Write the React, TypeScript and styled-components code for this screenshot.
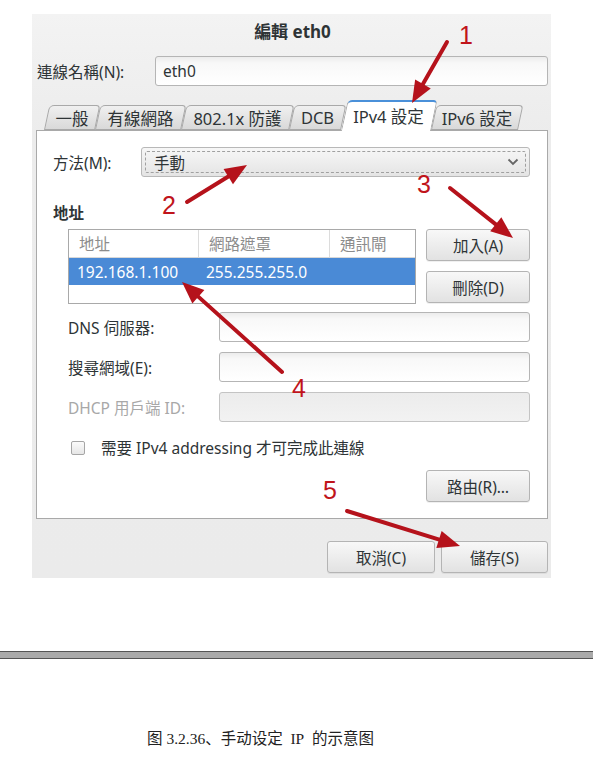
import styled, { createGlobalStyle } from 'styled-components';

const GlobalStyle = createGlobalStyle`
  html, body {
    margin: 0;
    padding: 0;
    background: #ffffff;
  }
  body {
    font-family: "Noto Sans", "Noto Sans CJK TC", sans-serif;
  }
`;

const Page = styled.div`
  width: 593px;
  height: 771px;
  display: flex;
  flex-direction: column;
  overflow: hidden;
`;

const Dialog = styled.div`
  position: relative;
  margin: 14px 0 0 32px;
  width: 519px;
  height: 564px;
  box-sizing: border-box;
  background: linear-gradient(to bottom, #f3f3f3 0px, #ececec 120px, #ebebeb 100%);
  color: #2e3436;
  font-size: 15.5px;
  display: flex;
  flex-direction: column;
`;

const Title = styled.div`
  height: 32px;
  display: flex;
  align-items: center;
  justify-content: center;
  font-weight: 700;
  font-size: 17px;
  padding-left: 2px;
`;

const NameRow = styled.div`
  display: flex;
  align-items: center;
  margin-top: 10px;
  padding: 0 3px 0 5px;
`;

const RowLabel = styled.label<{ width: number; muted?: boolean }>`
  width: ${p => p.width}px;
  flex: none;
  color: ${p => (p.muted ? '#a8a8a8' : '#2e3436')};
  white-space: nowrap;
`;

const TextField = styled.div<{ disabled?: boolean }>`
  height: 30px;
  box-sizing: border-box;
  flex: 1;
  border: 1px solid ${p => (p.disabled ? '#c4c4c4' : '#b5b5b5')};
  border-radius: 3px;
  background: ${p =>
    p.disabled
      ? 'linear-gradient(to bottom, #ececec, #f2f2f2)'
      : 'linear-gradient(to bottom, #ececec 0px, #f8f8f8 6px, #ffffff 100%)'};
  padding: 0 7px;
  display: flex;
  align-items: center;
  color: #2e3436;
`;

const TabStrip = styled.div`
  display: flex;
  align-items: flex-end;
  margin-top: 13px;
  padding-left: 12px;
  height: 31px;
  position: relative;
  z-index: 1;
`;

const Tab = styled.div<{ active?: boolean; w: number }>`
  width: ${p => p.w}px;
  height: ${p => (p.active ? 31 : 25)}px;
  box-sizing: border-box;
  padding-left: 5px;
  display: flex;
  align-items: center;
  justify-content: center;
  white-space: nowrap;
  font-size: 16.5px;
  color: #2e3436;
  margin-bottom: ${p => (p.active ? '-1px' : '0')};
  position: relative;
  z-index: ${p => (p.active ? 2 : 1)};

  &::before {
    content: '';
    position: absolute;
    inset: 0;
    z-index: -1;
    border: 1px solid #a9a9a9;
    border-top: ${p => (p.active ? '2px solid #4a90d9' : '1px solid #a9a9a9')};
    border-bottom: ${p => (p.active ? 'none' : '1px solid #a9a9a9')};
    border-radius: 5px 4px 0 0;
    background: ${p =>
      p.active ? '#ffffff' : 'linear-gradient(to bottom, #f0f0f0, #d9d9d9)'};
    transform: skewX(-12deg);
    transform-origin: bottom;
  }
`;

const Panel = styled.div`
  margin: 0 3px 0 4px;
  height: 389px;
  box-sizing: border-box;
  background: #ffffff;
  border: 1px solid #a9a9a9;
  padding: 16px 17px 0 16px;
  display: flex;
  flex-direction: column;
`;

const MethodRow = styled.div`
  display: flex;
  align-items: center;
`;

const Combo = styled.div`
  flex: 1;
  height: 30px;
  box-sizing: border-box;
  border: 1px solid #b8b8b8;
  border-radius: 3px;
  background: linear-gradient(to bottom, #f7f7f7, #e4e4e4);
  padding: 3px;
  display: flex;
`;

const ComboFocus = styled.div`
  flex: 1;
  border: 1px dashed #a0a0a0;
  border-radius: 2px;
  display: flex;
  align-items: center;
  justify-content: space-between;
  padding: 0 6px 0 8px;
`;

const SectionTitle = styled.div`
  font-weight: 700;
  margin-top: 26px;
  height: 20px;
  line-height: 20px;
`;

const AddressBlock = styled.div`
  display: flex;
  gap: 10px;
  margin: 6px 0 0 15px;
`;

const AddrTable = styled.div`
  width: 350px;
  height: 75px;
  box-sizing: border-box;
  border: 1px solid #a9a9a9;
  background: #ffffff;
  display: flex;
  flex-direction: column;
`;

const TableRow = styled.div<{ selected?: boolean; header?: boolean }>`
  height: 27px;
  display: grid;
  grid-template-columns: 129px 131px 1fr;
  align-items: center;
  background: ${p => (p.selected ? '#4a8ad6' : 'transparent')};
  color: ${p => (p.selected ? '#ffffff' : p.header ? '#8c8c8c' : '#2e3436')};
  border-bottom: ${p => (p.header ? '1px solid #d8d8d8' : 'none')};
`;

const Cell = styled.div<{ sep?: boolean; header?: boolean }>`
  padding-left: ${p => (p.header ? 10 : 8)}px;
  height: 100%;
  display: flex;
  align-items: center;
  border-left: ${p => (p.sep ? '1px solid #dcdcdc' : 'none')};
  box-sizing: border-box;
  white-space: nowrap;
`;

const ButtonColumn = styled.div`
  display: flex;
  flex-direction: column;
  gap: 10px;
`;

const Button = styled.div<{ w?: number }>`
  width: ${p => p.w ?? 104}px;
  height: 32px;
  box-sizing: border-box;
  border: 1px solid #b4b4b4;
  border-radius: 3px;
  background: linear-gradient(to bottom, #f8f8f8, #e2e2e2);
  box-shadow: 0 1px 0 rgba(0, 0, 0, 0.06);
  display: flex;
  align-items: center;
  justify-content: center;
  color: #2e3436;
  white-space: nowrap;
`;

const FieldList = styled.div`
  display: flex;
  flex-direction: column;
  gap: 10px;
  margin: 8px 0 0 15px;
`;

const FieldRow = styled.div`
  display: flex;
  align-items: center;
`;

const CheckRow = styled.div`
  display: flex;
  align-items: center;
  margin: 14px 0 0 18px;
  gap: 16px;
`;

const CheckBox = styled.div`
  width: 12px;
  height: 12px;
  border: 1px solid #a6a6a6;
  border-radius: 2px;
  background: linear-gradient(to bottom, #fbfbfb, #e6e6e6);
`;

const RouteRow = styled.div`
  display: flex;
  justify-content: flex-end;
  margin-top: 11px;
`;

const Footer = styled.div`
  display: flex;
  justify-content: flex-end;
  gap: 6px;
  margin-top: 22px;
  padding-right: 3px;
`;

const Overlay = styled.svg`
  position: absolute;
  left: 0;
  top: 0;
  pointer-events: none;
  z-index: 5;
`;

const Divider = styled.div`
  margin-top: 73px;
  height: 8px;
  box-sizing: border-box;
  border-top: 1px solid #555555;
  border-bottom: 1px solid #555555;
  background: #aaaaaa;
`;

const Caption = styled.div`
  margin: 67px 0 0 147px;
  font-family: "Liberation Serif", "Noto Sans CJK SC", serif;
  font-size: 15.5px;
  color: #222222;
  white-space: nowrap;
`;

const tabs = [
  { label: '一般', w: 51 },
  { label: '有線網路', w: 86 },
  { label: '802.1x 防護', w: 108 },
  { label: 'DCB', w: 52 },
  { label: 'IPv4 設定', w: 90, active: true },
  { label: 'IPv6 設定', w: 87 },
];

const arrows = [
  { num: '1', nx: 427, ny: 30, x1: 415, y1: 28, x2: 380, y2: 89 },
  { num: '2', nx: 130, ny: 200, x1: 155, y1: 188, x2: 215, y2: 151 },
  { num: '3', nx: 385, ny: 179, x1: 418, y1: 174, x2: 481, y2: 224 },
  { num: '4', nx: 260, ny: 383, x1: 250, y1: 358, x2: 150, y2: 268 },
  { num: '5', nx: 291, ny: 485, x1: 315, y1: 497, x2: 428, y2: 532 },
];

function Arrow({ x1, y1, x2, y2 }: { x1: number; y1: number; x2: number; y2: number }) {
  const dx = x2 - x1;
  const dy = y2 - y1;
  const len = Math.hypot(dx, dy);
  const ux = dx / len;
  const uy = dy / len;
  const head = 22;
  const half = 9;
  const bx = x2 - ux * head;
  const by = y2 - uy * head;
  const px = -uy * half;
  const py = ux * half;
  return (
    <g>
      <line x1={x1} y1={y1} x2={bx + ux * 2} y2={by + uy * 2} stroke="#b5121b" strokeWidth={4} strokeLinecap="round" />
      <polygon points={`${x2},${y2} ${bx + px},${by + py} ${bx - px},${by - py}`} fill="#b5121b" />
    </g>
  );
}

export default function App() {
  return (
    <Page>
      <GlobalStyle />
      <Dialog>
        <Title>編輯 eth0</Title>
        <NameRow>
          <RowLabel width={118}>連線名稱(N):</RowLabel>
          <TextField>eth0</TextField>
        </NameRow>
        <TabStrip>
          {tabs.map(t => (
            <Tab key={t.label} w={t.w} active={t.active}>
              {t.label}
            </Tab>
          ))}
        </TabStrip>
        <Panel>
          <MethodRow>
            <RowLabel width={88}>方法(M):</RowLabel>
            <Combo>
              <ComboFocus>
                <span>手動</span>
                <svg width="12" height="8" viewBox="0 0 12 8">
                  <path d="M1.5 1.5 L6 6 L10.5 1.5" fill="none" stroke="#666" strokeWidth="1.8" />
                </svg>
              </ComboFocus>
            </Combo>
          </MethodRow>
          <SectionTitle>地址</SectionTitle>
          <AddressBlock>
            <AddrTable>
              <TableRow header>
                <Cell header>地址</Cell>
                <Cell header sep>網路遮罩</Cell>
                <Cell header sep>通訊閘</Cell>
              </TableRow>
              <TableRow selected>
                <Cell>192.168.1.100</Cell>
                <Cell>255.255.255.0</Cell>
                <Cell></Cell>
              </TableRow>
            </AddrTable>
            <ButtonColumn>
              <Button>加入(A)</Button>
              <Button>刪除(D)</Button>
            </ButtonColumn>
          </AddressBlock>
          <FieldList>
            <FieldRow>
              <RowLabel width={151}>DNS 伺服器:</RowLabel>
              <TextField />
            </FieldRow>
            <FieldRow>
              <RowLabel width={151}>搜尋網域(E):</RowLabel>
              <TextField />
            </FieldRow>
            <FieldRow>
              <RowLabel width={151} muted>DHCP 用戶端 ID:</RowLabel>
              <TextField disabled />
            </FieldRow>
          </FieldList>
          <CheckRow>
            <CheckBox />
            <span>需要 IPv4 addressing 才可完成此連線</span>
          </CheckRow>
          <RouteRow>
            <Button>路由(R)…</Button>
          </RouteRow>
        </Panel>
        <Footer>
          <Button w={108}>取消(C)</Button>
          <Button w={107}>儲存(S)</Button>
        </Footer>
        <Overlay width="519" height="564" viewBox="0 0 519 564">
          {arrows.map(a => (
            <g key={a.num}>
              <Arrow x1={a.x1} y1={a.y1} x2={a.x2} y2={a.y2} />
              <text x={a.nx} y={a.ny} fill="#c0141b" fontSize="25" fontFamily="Liberation Sans, sans-serif">
                {a.num}
              </text>
            </g>
          ))}
        </Overlay>
      </Dialog>
      <Divider />
      <Caption>图 3.2.36、手动设定&nbsp; IP&nbsp; 的示意图</Caption>
    </Page>
  );
}
